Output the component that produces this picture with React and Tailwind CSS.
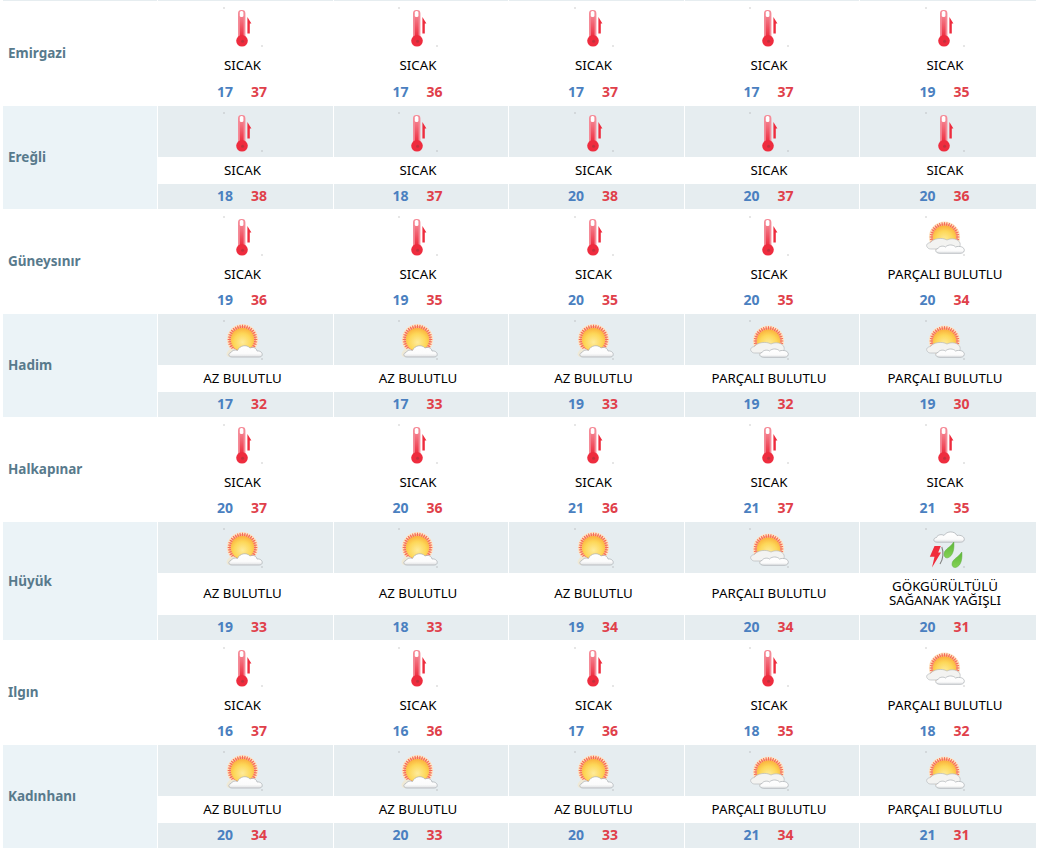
const SICAK = "SICAK";
const AZ = "AZ BULUTLU";
const PARCALI = "PARÇALI BULUTLU";
const GOK = "GÖKGÜRÜLTÜLÜ SAĞANAK YAĞIŞLI";

const ROWS = [
  { name: "Emirgazi", cells: [[SICAK, 17, 37], [SICAK, 17, 36], [SICAK, 17, 37], [SICAK, 17, 37], [SICAK, 19, 35]] },
  { name: "Ereğli", cells: [[SICAK, 18, 38], [SICAK, 18, 37], [SICAK, 20, 38], [SICAK, 20, 37], [SICAK, 20, 36]] },
  { name: "Güneysınır", cells: [[SICAK, 19, 36], [SICAK, 19, 35], [SICAK, 20, 35], [SICAK, 20, 35], [PARCALI, 20, 34]] },
  { name: "Hadim", cells: [[AZ, 17, 32], [AZ, 17, 33], [AZ, 19, 33], [PARCALI, 19, 32], [PARCALI, 19, 30]] },
  { name: "Halkapınar", cells: [[SICAK, 20, 37], [SICAK, 20, 36], [SICAK, 21, 36], [SICAK, 21, 37], [SICAK, 21, 35]] },
  { name: "Hüyük", cells: [[AZ, 19, 33], [AZ, 18, 33], [AZ, 19, 34], [PARCALI, 20, 34], [GOK, 20, 31]] },
  { name: "Ilgın", cells: [[SICAK, 16, 37], [SICAK, 16, 36], [SICAK, 17, 36], [SICAK, 18, 35], [PARCALI, 18, 32]] },
  { name: "Kadınhanı", cells: [[AZ, 20, 34], [AZ, 20, 33], [AZ, 20, 33], [PARCALI, 21, 34], [PARCALI, 21, 31]] },
];

const COLS = "grid grid-cols-[154px_175px_174px_175px_174px_176px] gap-x-px";

const Dots = () => (
  <>
    <rect x="5.5" y="5.5" width="1" height="1" fill="#9a9a9a" />
    <rect x="43.5" y="43.5" width="1" height="1" fill="#9a9a9a" />
  </>
);

const Gradients = () => (
  <defs>
    <radialGradient id="sunFill" cx="0.5" cy="0.62" r="0.62">
      <stop offset="0" stopColor="#feeb9a" />
      <stop offset="0.6" stopColor="#fdd758" />
      <stop offset="1" stopColor="#fbb03c" />
    </radialGradient>
    <linearGradient id="cloudFill" x1="0" y1="0" x2="0" y2="1">
      <stop offset="0" stopColor="#ffffff" />
      <stop offset="0.7" stopColor="#fbfbfb" />
      <stop offset="1" stopColor="#dfe1e3" />
    </linearGradient>
    <linearGradient id="dropFill" x1="0" y1="0" x2="0" y2="1">
      <stop offset="0" stopColor="#5cb638" />
      <stop offset="1" stopColor="#84d254" />
    </linearGradient>
    <linearGradient id="tubeFill" x1="0" y1="0" x2="0" y2="1">
      <stop offset="0" stopColor="#f47c8a" />
      <stop offset="1" stopColor="#ee2c3e" />
    </linearGradient>
  </defs>
);

const Thermometer = () => (
  <svg width="50" height="50" viewBox="0 0 50 50" className="blur-[0.3px]">
    <Gradients />
    <Dots />
    <rect x="20" y="8" width="7.4" height="30" rx="3.4" fill="#f58a97" />
    <rect x="21.8" y="9" width="3.6" height="6" rx="1.6" fill="#fff" />
    <rect x="21.8" y="15" width="3.8" height="20" fill="url(#tubeFill)" />
    <circle cx="24" cy="38.8" r="5.8" fill="#ee2c3e" />
    <circle cx="24.6" cy="39.2" r="1.5" fill="#c2303c" />
    <path d="M29.4 31.5V15L33.4 21.5H31.8V31.5Z" fill="#ee2c3e" />
  </svg>
);

const Sun = ({ cx, cy }) => {
  const rays = Array.from({ length: 36 }, (_, i) => i * 10);
  return (
    <g>
      <circle cx={cx} cy={cy} r="15.6" fill="#fde6c6" />
      <circle cx={cx} cy={cy} r="13.6" fill="#fcb088" />
      {rays.map((a) => (
        <rect key={a} x={cx - 0.55} y={cy - 14.8} width="1.1" height="3.6" fill="#f56a56" transform={`rotate(${a} ${cx} ${cy})`} />
      ))}
      <circle cx={cx} cy={cy} r="11.6" fill="url(#sunFill)" />
    </g>
  );
};

const SunnyCloud = () => (
  <svg width="50" height="50" viewBox="0 0 50 50" className="blur-[0.5px]">
    <Gradients />
    <Dots />
    <Sun cx={24.5} cy={24.5} />
    <path d="M10 36C12 33 16 33 18 35L16 42H11C8 41 8 38 10 36Z" fill="#efe9d6" />
    <path d="M14 42C10.5 42 9.5 38.5 13 37.5C14 35 17.5 34.5 19.5 35.5C21.5 30.5 28.5 29 32 33C35 31.5 38.5 33 39 36C42.5 35.5 45 38 44 40.5C43.5 41.6 42 42 41 42Z" fill="url(#cloudFill)" stroke="#a9adb2" strokeWidth="0.7" />
  </svg>
);

const PartlyCloud = () => (
  <svg width="50" height="50" viewBox="0 0 50 50" className="blur-[0.5px]">
    <Gradients />
    <Dots />
    <Sun cx={24.5} cy={26} />
    <path d="M8 37C5.5 35 6.5 32 10.5 31.5C13 27.5 22 26 27 29C32 26.5 38.5 28 40 32C41 36 38 38 35 38H12C10 38 9 38 8 37Z" fill="#f3f3f1" stroke="#b8babd" strokeWidth="0.7" />
    <path d="M20 42.3C15 42.3 14.5 38 18 37.5C19 35 23.5 34.5 25.5 36C28 33.2 33.5 33.4 35.5 36C39.5 34.5 45 36 44.2 39.8C43.8 41.8 41.8 42.3 40 42.3Z" fill="url(#cloudFill)" stroke="#a9adb2" strokeWidth="0.7" />
  </svg>
);

const Storm = () => (
  <svg width="50" height="50" viewBox="0 0 50 50" className="blur-[0.3px]">
    <Gradients />
    <Dots />
    <path d="M17 19.2C13 19.2 12.8 15 16.5 14.5C17.5 11.5 22 11 24 12.5C27 7.5 35 8 37 12.5C41 11.5 45 14 44.2 17C43.8 18.6 42 19.2 40.5 19.2Z" fill="url(#cloudFill)" stroke="#a9adb2" strokeWidth="0.7" />
    <path d="M21.8 24C23.8 29 23.3 36 20 41" fill="none" stroke="#808080" strokeWidth="1.1" />
    <path d="M14.5 23H20.8L18.2 29.5H21L12 44.5L14.5 33.8H9.8Z" fill="#f02c3c" />
    <path d="M33.8 19C34.4 25 33.4 33 27.8 34.8C24 35.4 23.2 31 25 28C27 25 31.4 23 33.8 19Z" fill="url(#dropFill)" stroke="#56a836" strokeWidth="0.5" />
    <path d="M41.8 29C42.4 35 41.4 43 35.8 44.4C32 45 31.2 41 33 38C35 35 39.4 33 41.8 29Z" fill="url(#dropFill)" stroke="#56a836" strokeWidth="0.5" />
  </svg>
);

const WeatherIcon = ({ kind }) => {
  if (kind === SICAK) return <Thermometer />;
  if (kind === AZ) return <SunnyCloud />;
  if (kind === PARCALI) return <PartlyCloud />;
  return <Storm />;
};

const Cell = ({ kind, low, high, shaded, textHeight }) => {
  const band = shaded ? "bg-[#e6edf0]" : "bg-white";
  return (
    <div className="flex flex-col">
      <div className={`${band} h-[51px] pr-[6px] flex items-center justify-center`}>
        <WeatherIcon kind={kind} />
      </div>
      <div className={`${textHeight} bg-white pr-[6px] pb-[2px] flex items-center justify-center text-center text-[13.3px] leading-[14px] text-black`}>
        <span className={kind === GOK ? "w-[140px]" : ""}>{kind}</span>
      </div>
      <div className={`${band} flex-1 pr-[7px] pb-[2px] flex items-center justify-center gap-[18px] text-[14px] font-bold`}>
        <span className="text-[#4a80c0]">{low}</span>
        <span className="text-[#e0404a]">{high}</span>
      </div>
    </div>
  );
};

export default function App() {
  return (
    <div className="w-[1044px] h-[853px] bg-white pl-[3px] flex flex-col gap-y-px overflow-hidden font-['Noto_Sans','Open_Sans',sans-serif]">
      <div className={`${COLS} h-px shrink-0 -mb-px`}>
        {Array.from({ length: 6 }, (_, i) => (
          <div key={i} className="bg-[#e6edf0]" />
        ))}
      </div>
      {ROWS.map((row, i) => {
        const shaded = i % 2 === 1;
        const tall = row.name === "Hüyük";
        const height = tall ? "h-[118px]" : i === 0 ? "h-[104px]" : "h-[103px]";
        return (
          <div key={row.name} className={`${COLS} ${height} shrink-0`}>
            <div className={`${shaded ? "bg-[#ebf3f7]" : "bg-white"} pl-[5px] flex items-center text-[13.5px] font-bold text-[#587a8c]`}>
              {row.name}
            </div>
            {row.cells.map(([kind, low, high], j) => (
              <Cell key={j} kind={kind} low={low} high={high} shaded={shaded} textHeight={tall ? "h-[42px]" : "h-[27px]"} />
            ))}
          </div>
        );
      })}
    </div>
  );
}
